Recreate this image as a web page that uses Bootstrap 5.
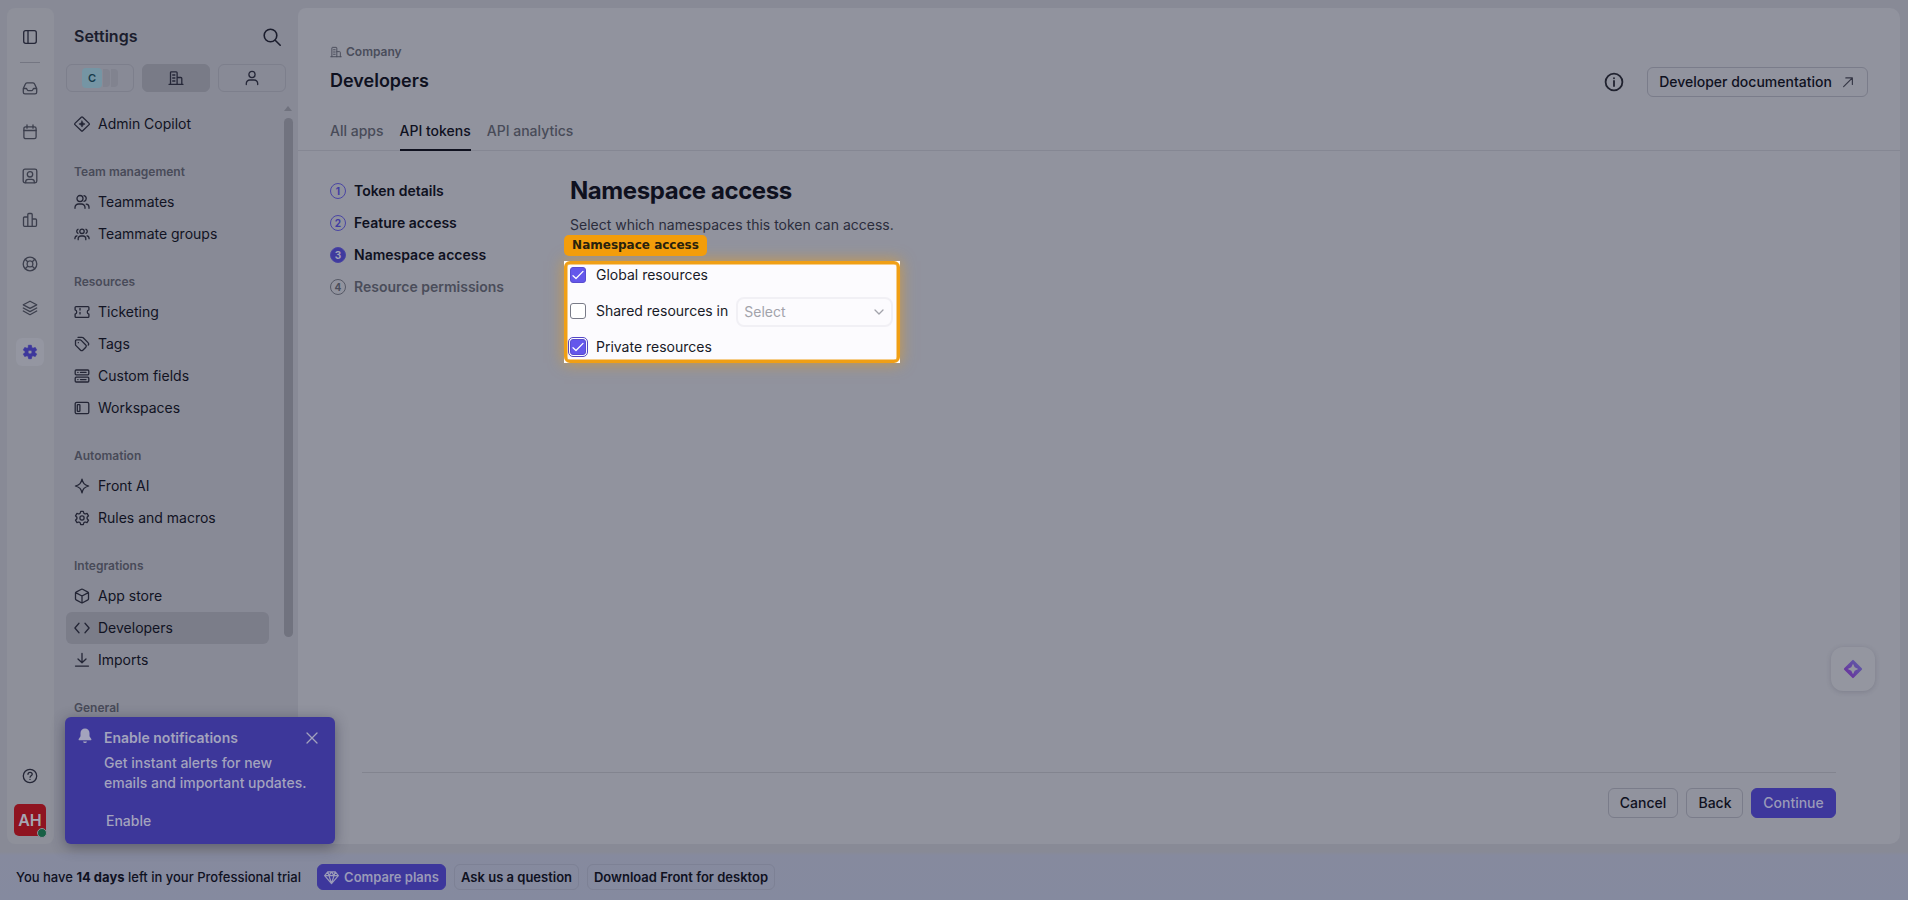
<!DOCTYPE html>
<html lang="en">
<head>
<meta charset="utf-8">
<meta name="viewport" content="width=device-width, initial-scale=1">
<title>Settings - Developers</title>
<link href="https://cdn.jsdelivr.net/npm/bootstrap@5.3.0/dist/css/bootstrap.min.css" rel="stylesheet">
<style>
:root{--ink:#0f111f;--ink2:#252738;--line:#858793;--page:#888a96;--surface:#91939e;--brand:#3d379c}
html,body{height:100%}
body{font-family:Inter,"Liberation Sans",sans-serif;font-size:14px;line-height:20px;color:var(--ink);background:var(--page);overflow:hidden}
svg{flex:none;fill:none;stroke:currentColor;stroke-width:1.3;stroke-linecap:round;stroke-linejoin:round;display:block}
.shell{height:844px;padding:8px 8px 0 7px}
.rail{width:47px;background:#8e909a;border-radius:8px;color:#3c3f4d;padding:15px 1px 8px 0}
.rail-item{width:28px;height:28px;border-radius:6px;margin-bottom:16px}
.rail-item.first{margin-bottom:11px;color:var(--ink2)}
.rail-item.last{color:#242636}
.rail-line{width:20px;height:1px;background:#747682;margin-bottom:11px}
.rail-item.active{background:#9496a1;color:#3d379c}
.avatar{width:32px;height:32px;border-radius:5px;background:#8f1420;color:#a5a7b2;font-size:16px;font-weight:600;margin-top:14px}
.presence{width:10px;height:10px;right:-1px;bottom:-2px;background:#176045;border:1.5px solid #8e909a;border-radius:50%}
.side{width:244px;padding:0 12px}
.side-head{height:56px;padding:0 4px 0 8px;color:#1b1d2d}
.side-head h1{font-size:16px;line-height:20px;font-weight:600}
.side-head svg{margin-top:2px;stroke-width:1.6}
.scope{width:68px;height:28px;border:1px solid #7d7f8c;border-radius:6px;color:var(--ink2)}
.scope.active{background:#797b87;border-color:#797b87}
.scope-c{width:20px;height:20px;border-radius:4px;background:#7595a4;color:#173b4b;font-size:11px;font-weight:600}
.scope-s{width:7px;height:18px;border-radius:0 4px 4px 0;background:#81838f;margin-left:1px}
.side-body{padding-top:16px;height:736px;overflow:hidden}
.side-item{height:32px;width:203px;padding-left:8px;gap:8px;border-radius:6px;color:#111323}
.side-item svg{color:#242636}
.side-item.active{background:#7b7d89}
.side-title{height:28px;line-height:28px;margin-top:18px;padding-left:8px;font-size:12px;font-weight:600;color:#484b59}
.sb{right:5px;top:98px;width:9px}
.sb-arrow{width:0;border:4.5px solid transparent;border-top:0;border-bottom:5px solid #70727e}
.sb-thumb{height:519px;margin-top:7px;border-radius:5px;background:#71737f}
.panel{background:var(--surface);border-radius:8px 10px 10px 8px}
.panel-head{height:143px;border-bottom:1px solid var(--line);padding:0 32px}
.crumb{font-size:12px;font-weight:600;color:#4a4d5b;gap:4px;padding-top:34px}
.panel-title{font-size:18px;line-height:24px;font-weight:600;margin:7px 0 0}
.head-actions{padding-top:59px;gap:23px;color:#20222f}
.head-actions>svg{margin-top:5px;stroke-width:1.8}
.btn-flat{--bs-btn-padding-y:4px;--bs-btn-font-size:14px;--bs-btn-font-weight:500;--bs-btn-line-height:20px;--bs-btn-border-radius:6px;--bs-btn-color:var(--ink);--bs-btn-border-color:#7a7c8a;height:30px;display:inline-flex;align-items:center;justify-content:center;padding-left:0;padding-right:0;white-space:nowrap}
.btn-brand{--bs-btn-color:#9a9ab8;--bs-btn-bg:var(--brand);--bs-btn-border-color:var(--brand)}
.w-doc{width:221px;gap:9px;padding-right:1px}.w-doc svg{color:#343645}
.w-cancel{width:70px}.w-back{width:57px;padding-left:1px}.w-next{width:85px}
.w-plans{width:129px;gap:5px}.w-ask{width:125px}.w-dl{width:188px}
.tabs{gap:16px;font-weight:500;color:#484b58;padding-left:32px;left:0;bottom:-1px}
.tab-link{height:30px;line-height:20px}
.tab-link.active{color:var(--ink);border-bottom:2px solid var(--ink)}
.work{padding:24px 32px 0}
.steps{width:240px}
.step{height:32px;gap:8px;font-weight:600}
.num{width:16px;height:16px;border:1px solid #4a45a4;border-radius:50%;font-size:10px;font-weight:700;line-height:14px;color:#413ca2;text-align:center}
.step.now .num{background:#3f3a9e;color:#a2a3b5}
.step.todo{color:#4a4d5a}.step.todo .num{border-color:#565966;color:#4a4d5a}
.form-title{font-size:24px;line-height:32px;font-weight:700;letter-spacing:-.43px;margin:0}
.sub{margin:8px 0 0;color:#2b2d3c}
.spot{width:336px;height:102px;margin:26px 0 0 -6px;background:#fff;box-shadow:0 0 14px 0 rgba(245,158,11,.6)}
.spot-ring{height:102px;border:3px solid #f09f15;border-radius:6px;background:#fcfbfe;padding:3px 4px 0 3px;color:#181a27;box-shadow:inset 0 0 0 .5px #f09f15}
.spot-tag{left:0;top:-26px;height:21px;width:143px;border-radius:5px;background:#f39d0b;color:#29220d;font:700 12px/20px "DejaVu Sans",sans-serif;text-align:center}
.opt{height:36px;gap:10px;white-space:nowrap}
.opt:first-child{margin-top:-10px}
.box{width:16px;height:16px;border-radius:3px;background:#6457eb;border:1px solid #594dd0;color:#fff;flex:none}
.box.off{background:#fff;border-color:#797b88}
.box.focus{outline:1px solid #5548c6;outline-offset:1px}
.pick{width:157px;height:30px;border:2px solid #f1f0f5;border-radius:8px;padding:0 7px 0 6px;color:#a2a3ab;margin:2px 0 0 -2px;flex:none}
.panel-foot{margin:0 64px;height:72px;padding-top:15px;gap:8px;border-top:1px solid #82848f}
.helper{right:33px;bottom:153px;width:44px;height:44px;border-radius:12px;background:#9496a0;box-shadow:0 1px 5px rgba(50,52,70,.2)}
.toast-box{left:65px;top:717px;width:270px;height:127px;border-radius:6px;background:#3d379a;color:#a3a3bd;font-weight:500;box-shadow:0 3px 14px rgba(30,30,55,.45);padding:11px 17px 0 13px;z-index:5}
.toast-text{padding-left:12px}
.toast-copy{margin-top:5px}
.toast-go{margin:18px 0 0 2px}
.trial{height:56px;padding:10px 16px 0;font-size:13px;font-weight:500;background:linear-gradient(#888a96 0 8px,#868a9e 11px,#858a9f)}
.trial .btn-flat{--bs-btn-font-size:13px;--bs-btn-font-weight:600;height:26px;--bs-btn-border-color:#7d8195}
.trial .btn-brand{--bs-btn-border-color:var(--brand)}
</style>
</head>
<body>
<svg width="0" height="0" class="position-absolute">
<defs>
<linearGradient id="glow" x1="1" y1="0" x2="0" y2="1"><stop offset="0" stop-color="#5d62a8"/><stop offset="1" stop-color="#6b2a9c"/></linearGradient>
<symbol id="i-panel" viewBox="0 0 16 16"><rect x="1.7" y="1.7" width="12.6" height="12.6" rx="2"/><path d="M6 1.7v12.6"/></symbol>
<symbol id="i-inbox" viewBox="0 0 16 16"><path d="M1.300 8.500v3.700a1.700 1.700 0 0 0 1.700 1.700h10a1.700 1.700 0 0 0 1.700-1.700V8.500L12.600 4a1.700 1.700 0 0 0-1.600-1.200H5A1.700 1.700 0 0 0 3.400 4L1.300 8.500h2.900c.8 0 1 2.200 2.200 2.200h3.200c1.200 0 1.400-2.200 2.200-2.200h2.900"/></symbol>
<symbol id="i-cal" viewBox="0 0 16 16"><rect x="1.900" y="2.800" width="12.200" height="11.900" rx="1.800"/><path d="M1.900 6.500h12.200M5 1v3.200M11 1v3.200"/></symbol>
<symbol id="i-contact" viewBox="0 0 16 16"><rect x="1.200" y="1.200" width="13.600" height="13.600" rx="1.800"/><circle cx="8" cy="6.300" r="2.700"/><path d="M3.700 14.500v-.8c0-1.500 1.100-2.400 2.500-2.400h3.600c1.400 0 2.500.9 2.500 2.400v.8"/></symbol>
<symbol id="i-bars" viewBox="0 0 16 16"><path d="M5.800 14.300H2.500a1 1 0 0 1-1-1V6a1 1 0 0 1 1-1h3.300M10.200 7h3.300a1 1 0 0 1 1 1v5.300a1 1 0 0 1-1 1h-3.300M5.800 14.300V2.500a1 1 0 0 1 1-1h2.400a1 1 0 0 1 1 1v11.800z"/></symbol>
<symbol id="i-buoy" viewBox="0 0 16 16"><circle cx="8" cy="8" r="6.800"/><path d="M5.500 6.200a3 3 0 0 1 5 0c.5 1.100.5 2.500 0 3.600-1.100 1.300-3.900 1.300-5 0-.5-1.100-.5-2.500 0-3.600zM3.200 3.200l2.500 2.500M12.800 3.200l-2.500 2.500M3.200 12.800l2.500-2.500M12.800 12.800l-2.500-2.500"/></symbol>
<symbol id="i-layers" viewBox="0 0 16 16"><path d="M8 1.200 1.300 4.800 8 8.300l6.700-3.500zM1.300 8 8 11.600 14.700 8M1.300 11 8 14.700l6.700-3.700"/></symbol>
<symbol id="i-gearfill" viewBox="0 0 16 16"><path fill="currentColor" fill-rule="evenodd" stroke-width=".8" d="M6.700 1.300h2.600l.6 2.400 1 .6 2.400-.7 1.300 2.300L12.900 7.600v.8l1.700 1.700-1.300 2.300-2.400-.7-1 .6-.6 2.400H6.700l-.6-2.400-1-.6-2.400.7-1.300-2.300 1.700-1.700v-.8L1.400 5.900l1.300-2.300 2.400.7 1-.6zM8 5.900a2.100 2.100 0 1 0 0 4.200 2.100 2.100 0 0 0 0-4.200z"/></symbol>
<symbol id="i-help" viewBox="0 0 16 16"><circle cx="8" cy="8" r="6.700"/><path d="M6 6.300C6 5 7 4.300 8.100 4.300c1.200 0 2.100.8 2.100 1.900 0 1.500-2.100 1.600-2.100 3M8 11.300v.1"/></symbol>
<symbol id="i-search" viewBox="0 0 20 20"><circle cx="8.500" cy="8.500" r="6.300"/><path d="m13.200 13.200 5 5"/></symbol>
<symbol id="i-company" viewBox="0 0 16 16"><path d="M1 14.300h14M2.500 14.300V2.700a.9.900 0 0 1 .9-.9h4.800a.9.900 0 0 1 .9.900v11.600M9.100 7.500h3.700a1 1 0 0 1 1 1v5.800M4.700 5h2.200M4.700 8h2.200M4.700 11h2.200"/></symbol>
<symbol id="i-person" viewBox="0 0 16 16"><circle cx="8" cy="4.500" r="3.100"/><path d="M2.300 14.600v-1.100A3.500 3.500 0 0 1 5.800 10h4.400a3.500 3.500 0 0 1 3.500 3.500v1.100"/></symbol>
<symbol id="i-copilot" viewBox="0 0 16 16"><path d="M7.300 1.200.9 7.400a.8.800 0 0 0 0 1.200l6.400 6.200a1 1 0 0 0 1.400 0l6.400-6.200a.8.800 0 0 0 0-1.200L8.700 1.200a1 1 0 0 0-1.400 0z"/><path fill="currentColor" stroke-width=".6" d="M8 4.900 9 7l2.100 1L9 9l-1 2.100L7 9 4.900 8 7 7z"/></symbol>
<symbol id="i-mates" viewBox="0 0 16 16"><circle cx="6" cy="4.500" r="3"/><path d="M10 1.600a3 3 0 0 1 0 5.800M1 14.300v-.8A3.500 3.500 0 0 1 4.500 10h3a3.500 3.500 0 0 1 3.500 3.500v.8M12.200 10.100a3 3 0 0 1 2.800 3v1.200"/></symbol>
<symbol id="i-groups" viewBox="0 0 16 16"><circle cx="8" cy="5.300" r="2.200"/><path d="M4 7.300a2.200 2.200 0 0 1 0-4M12 7.300a2.200 2.200 0 0 0 0-4M4.200 13.700v-1A2.600 2.600 0 0 1 6.800 10h2.400a2.600 2.600 0 0 1 2.600 2.700v1M.9 12.700c0-1.600.8-2.700 2.100-2.900M15.100 12.700c0-1.600-.8-2.700-2.100-2.900"/></symbol>
<symbol id="i-ticket" viewBox="0 0 16 16"><path d="M2 2.600h12a.9.900 0 0 1 .9.900v2.300a2.300 2.300 0 0 0 0 4.400v2.300a.9.900 0 0 1-.9.900H2a.9.900 0 0 1-.9-.9v-2.300a2.300 2.300 0 0 0 0-4.400V3.500A.9.900 0 0 1 2 2.600z"/><path stroke-dasharray="1.600 2.200" d="M6 4.500v7.500"/></symbol>
<symbol id="i-tags" viewBox="0 0 16 16"><path d="M1.500 5.100v3.300c0 .5.200.9.500 1.200l4.600 4.600a1.500 1.500 0 0 0 2.200 0l3-3a1.500 1.500 0 0 0 0-2.200L7.200 4.400c-.3-.3-.7-.5-1.200-.5H2.700c-.7 0-1.200.5-1.200 1.200zM4 1.300h4c.5 0 .9.200 1.200.5l4.800 4.800c.8.800.8 1.800.2 2.500"/><path d="M4.300 6.700h.1"/></symbol>
<symbol id="i-fields" viewBox="0 0 16 16"><rect x="1.200" y="2" width="13.600" height="4.800" rx="1"/><rect x="1.200" y="9.200" width="13.600" height="4.800" rx="1"/><path d="M3.800 4.400h.2M6.500 4.400h5.500M3.800 11.600h.2M6.500 11.600h5.500"/></symbol>
<symbol id="i-work" viewBox="0 0 16 16"><rect x="1.200" y="2.300" width="13.600" height="11.400" rx="1.500"/><rect x="3.300" y="4.600" width="2.600" height="6.800" rx=".6"/></symbol>
<symbol id="i-spark" viewBox="0 0 16 16"><path d="M8 1.200c.9 4.100 2.200 5.500 6.600 6.800-4.400 1.300-5.700 2.700-6.600 6.800C7.100 10.700 5.800 9.300 1.400 8 5.800 6.700 7.100 5.300 8 1.200z"/></symbol>
<symbol id="i-gear" viewBox="0 0 16 16"><path d="M6.700 1.300h2.600l.5 1.900 1.300.8 1.900-.6 1.500 2.400L13.100 7.300v1.400l1.400 1.500-1.500 2.400-1.900-.6-1.300.8-.5 1.900H6.700l-.5-1.900-1.300-.8-1.900.6-1.500-2.400 1.400-1.500V7.300L1.500 5.800 3 3.400l1.900.6 1.300-.8z"/><circle cx="8" cy="8" r="2.100"/></symbol>
<symbol id="i-cube" viewBox="0 0 16 16"><path d="M7.400 1.300 2.100 4.100c-.4.200-.6.500-.6.900v6c0 .4.200.7.600.9l5.300 2.800c.4.200.8.200 1.200 0l5.300-2.800c.4-.2.600-.5.600-.9V5c0-.4-.2-.7-.6-.9L8.600 1.300a1.300 1.300 0 0 0-1.200 0zM1.700 4.600 8 8l6.300-3.400M8 8v6.800"/></symbol>
<symbol id="i-code" viewBox="0 0 16 16"><path d="M5 3.300.9 8 5 12.700M11 3.300 15.100 8 11 12.700"/></symbol>
<symbol id="i-import" viewBox="0 0 16 16"><path d="M8 1.500v9M4 7l4 3.800L12 7M1.500 14.100h13"/></symbol>
<symbol id="i-info" viewBox="0 0 20 20"><circle cx="10" cy="10" r="8.400"/><path d="M10 9v5M10 6.100v.2"/></symbol>
<symbol id="i-out" viewBox="0 0 16 16"><path d="M3 13.300 12.700 3.600M5.500 3.300H13v7.500"/></symbol>
<symbol id="i-check" viewBox="0 0 14 14"><path d="m2 7.800 3 2.700L12 3.400"/></symbol>
<symbol id="i-gem" viewBox="0 0 16 16"><path d="M4 2h8l3.300 4L8 14.500.7 6zM.7 6h14.600M4 2l1.300 4L8 14.300 10.700 6 12 2M5.300 6 8 2l2.700 4"/></symbol>
</defs>
</svg>

<div class="shell d-flex position-relative">
  <nav class="rail d-flex flex-column align-items-center">
    <div class="rail-item first d-flex align-items-center justify-content-center"><svg width="16" height="16"><use href="#i-panel"/></svg></div>
    <div class="rail-line"></div>
    <div class="rail-item d-flex align-items-center justify-content-center"><svg width="16" height="16"><use href="#i-inbox"/></svg></div>
    <div class="rail-item d-flex align-items-center justify-content-center"><svg width="16" height="16"><use href="#i-cal"/></svg></div>
    <div class="rail-item d-flex align-items-center justify-content-center"><svg width="16" height="16"><use href="#i-contact"/></svg></div>
    <div class="rail-item d-flex align-items-center justify-content-center"><svg width="16" height="16"><use href="#i-bars"/></svg></div>
    <div class="rail-item d-flex align-items-center justify-content-center"><svg width="16" height="16"><use href="#i-buoy"/></svg></div>
    <div class="rail-item d-flex align-items-center justify-content-center"><svg width="16" height="16"><use href="#i-layers"/></svg></div>
    <div class="rail-item active d-flex align-items-center justify-content-center"><svg width="16" height="16"><use href="#i-gearfill"/></svg></div>
    <div class="rail-item last mt-auto mb-0 d-flex align-items-center justify-content-center"><svg width="16" height="16"><use href="#i-help"/></svg></div>
    <div class="avatar position-relative d-flex align-items-center justify-content-center flex-shrink-0">AH<span class="presence position-absolute"></span></div>
  </nav>

  <aside class="side position-relative">
    <div class="side-head d-flex align-items-center justify-content-between"><h1 class="m-0">Settings</h1><svg width="20" height="20"><use href="#i-search"/></svg></div>
    <div class="d-flex gap-2">
      <div class="scope d-flex align-items-center justify-content-center"><span class="scope-c d-flex align-items-center justify-content-center">C</span><span class="scope-s"></span><span class="scope-s"></span></div>
      <div class="scope active d-flex align-items-center justify-content-center"><svg width="16" height="16"><use href="#i-company"/></svg></div>
      <div class="scope d-flex align-items-center justify-content-center"><svg width="16" height="16"><use href="#i-person"/></svg></div>
    </div>
    <div class="side-body">
      <div class="side-item d-flex align-items-center"><svg width="16" height="16"><use href="#i-copilot"/></svg>Admin Copilot</div>
      <div class="side-title">Team management</div>
      <div class="side-item d-flex align-items-center"><svg width="16" height="16"><use href="#i-mates"/></svg>Teammates</div>
      <div class="side-item d-flex align-items-center"><svg width="16" height="16"><use href="#i-groups"/></svg>Teammate groups</div>
      <div class="side-title">Resources</div>
      <div class="side-item d-flex align-items-center"><svg width="16" height="16"><use href="#i-ticket"/></svg>Ticketing</div>
      <div class="side-item d-flex align-items-center"><svg width="16" height="16"><use href="#i-tags"/></svg>Tags</div>
      <div class="side-item d-flex align-items-center"><svg width="16" height="16"><use href="#i-fields"/></svg>Custom fields</div>
      <div class="side-item d-flex align-items-center"><svg width="16" height="16"><use href="#i-work"/></svg>Workspaces</div>
      <div class="side-title">Automation</div>
      <div class="side-item d-flex align-items-center"><svg width="16" height="16"><use href="#i-spark"/></svg>Front AI</div>
      <div class="side-item d-flex align-items-center"><svg width="16" height="16"><use href="#i-gear"/></svg>Rules and macros</div>
      <div class="side-title">Integrations</div>
      <div class="side-item d-flex align-items-center"><svg width="16" height="16"><use href="#i-cube"/></svg>App store</div>
      <div class="side-item active d-flex align-items-center"><svg width="16" height="16"><use href="#i-code"/></svg>Developers</div>
      <div class="side-item d-flex align-items-center"><svg width="16" height="16"><use href="#i-import"/></svg>Imports</div>
      <div class="side-title">General</div>
    </div>
    <div class="sb position-absolute"><div class="sb-arrow"></div><div class="sb-thumb"></div></div>
  </aside>

  <main class="panel flex-grow-1 d-flex flex-column position-relative">
    <header class="panel-head d-flex justify-content-between position-relative">
      <div>
        <div class="crumb d-flex align-items-center"><svg width="12" height="12" viewBox="0 0 16 16"><use href="#i-company" width="16" height="16"/></svg>Company</div>
        <h2 class="panel-title">Developers</h2>
      </div>
      <div class="head-actions d-flex align-items-start">
        <svg width="20" height="20"><use href="#i-info"/></svg>
        <a class="btn btn-flat w-doc">Developer documentation<svg width="14" height="14"><use href="#i-out"/></svg></a>
      </div>
      <div class="tabs d-flex position-absolute"><span class="tab-link">All apps</span><span class="tab-link active">API tokens</span><span class="tab-link">API analytics</span></div>
    </header>
    <div class="work d-flex flex-grow-1">
      <div class="steps">
        <div class="step d-flex align-items-center"><span class="num">1</span>Token details</div>
        <div class="step d-flex align-items-center"><span class="num">2</span>Feature access</div>
        <div class="step now d-flex align-items-center"><span class="num">3</span>Namespace access</div>
        <div class="step todo d-flex align-items-center"><span class="num">4</span>Resource permissions</div>
      </div>
      <section>
        <h3 class="form-title">Namespace access</h3>
        <p class="sub">Select which namespaces this token can access.</p>
        <div class="spot position-relative">
          <span class="spot-tag position-absolute">Namespace access</span>
          <div class="spot-ring">
            <label class="opt d-flex align-items-center"><span class="box"><svg width="14" height="14"><use href="#i-check"/></svg></span>Global resources</label>
            <label class="opt d-flex align-items-center"><span class="box off"></span>Shared resources in<span class="pick d-flex align-items-center justify-content-between">Select<svg width="10" height="10" viewBox="0 0 10 10"><path d="m1 3 4 4 4-4"/></svg></span></label>
            <label class="opt d-flex align-items-center"><span class="box focus"><svg width="14" height="14"><use href="#i-check"/></svg></span>Private resources</label>
          </div>
        </div>
      </section>
    </div>
    <footer class="panel-foot d-flex justify-content-end">
      <button class="btn btn-flat w-cancel">Cancel</button>
      <button class="btn btn-flat w-back">Back</button>
      <button class="btn btn-flat btn-brand w-next">Continue</button>
    </footer>
  </main>
  <div class="helper position-absolute d-flex align-items-center justify-content-center"><svg width="20" height="20" viewBox="0 0 20 20"><path fill="url(#glow)" fill-rule="evenodd" stroke="none" d="M9.300 1.200 1.200 9.300a1 1 0 0 0 0 1.400l8.100 8.100a1 1 0 0 0 1.400 0l8.100-8.100a1 1 0 0 0 0-1.400l-8.100-8.100a1 1 0 0 0-1.400 0zM10 4.700l1.700 3.600 3.600 1.700-3.600 1.700L10 15.300l-1.700-3.600L4.700 10l3.600-1.700z"/></svg></div>

  <div class="toast-box position-absolute d-flex">
    <svg width="14" height="16" viewBox="0 0 14 16"><path fill="currentColor" stroke="none" d="M7 .4a4.500 4.500 0 0 0-4.500 4.500v3.300L.7 11c-.3.700 0 1.300.8 1.300h11c.8 0 1.100-.6.800-1.300l-1.800-2.800V4.900A4.500 4.500 0 0 0 7 .4zM5 13.500h4c-.3 1-1 1.500-2 1.500s-1.700-.5-2-1.500z"/></svg>
    <div class="toast-text flex-grow-1">
      <div class="d-flex justify-content-between align-items-center"><span class="fw-semibold">Enable notifications</span><svg width="12" height="12" viewBox="0 0 12 12"><path d="m1 1 10 10M11 1 1 11"/></svg></div>
      <div class="toast-copy text-nowrap">Get instant alerts for new<br>emails and important updates.</div>
      <div class="toast-go">Enable</div>
    </div>
  </div>
</div>

<div class="trial d-flex align-items-center gap-2">
  <span class="me-2">You have <b>14 days</b> left in your Professional trial</span>
  <button class="btn btn-flat btn-brand w-plans"><svg width="15" height="15"><use href="#i-gem"/></svg>Compare plans</button>
  <button class="btn btn-flat w-ask">Ask us a question</button>
  <button class="btn btn-flat w-dl">Download Front for desktop</button>
</div>
<script src="https://cdn.jsdelivr.net/npm/bootstrap@5.3.0/dist/js/bootstrap.bundle.min.js"></script>
</body>
</html>
